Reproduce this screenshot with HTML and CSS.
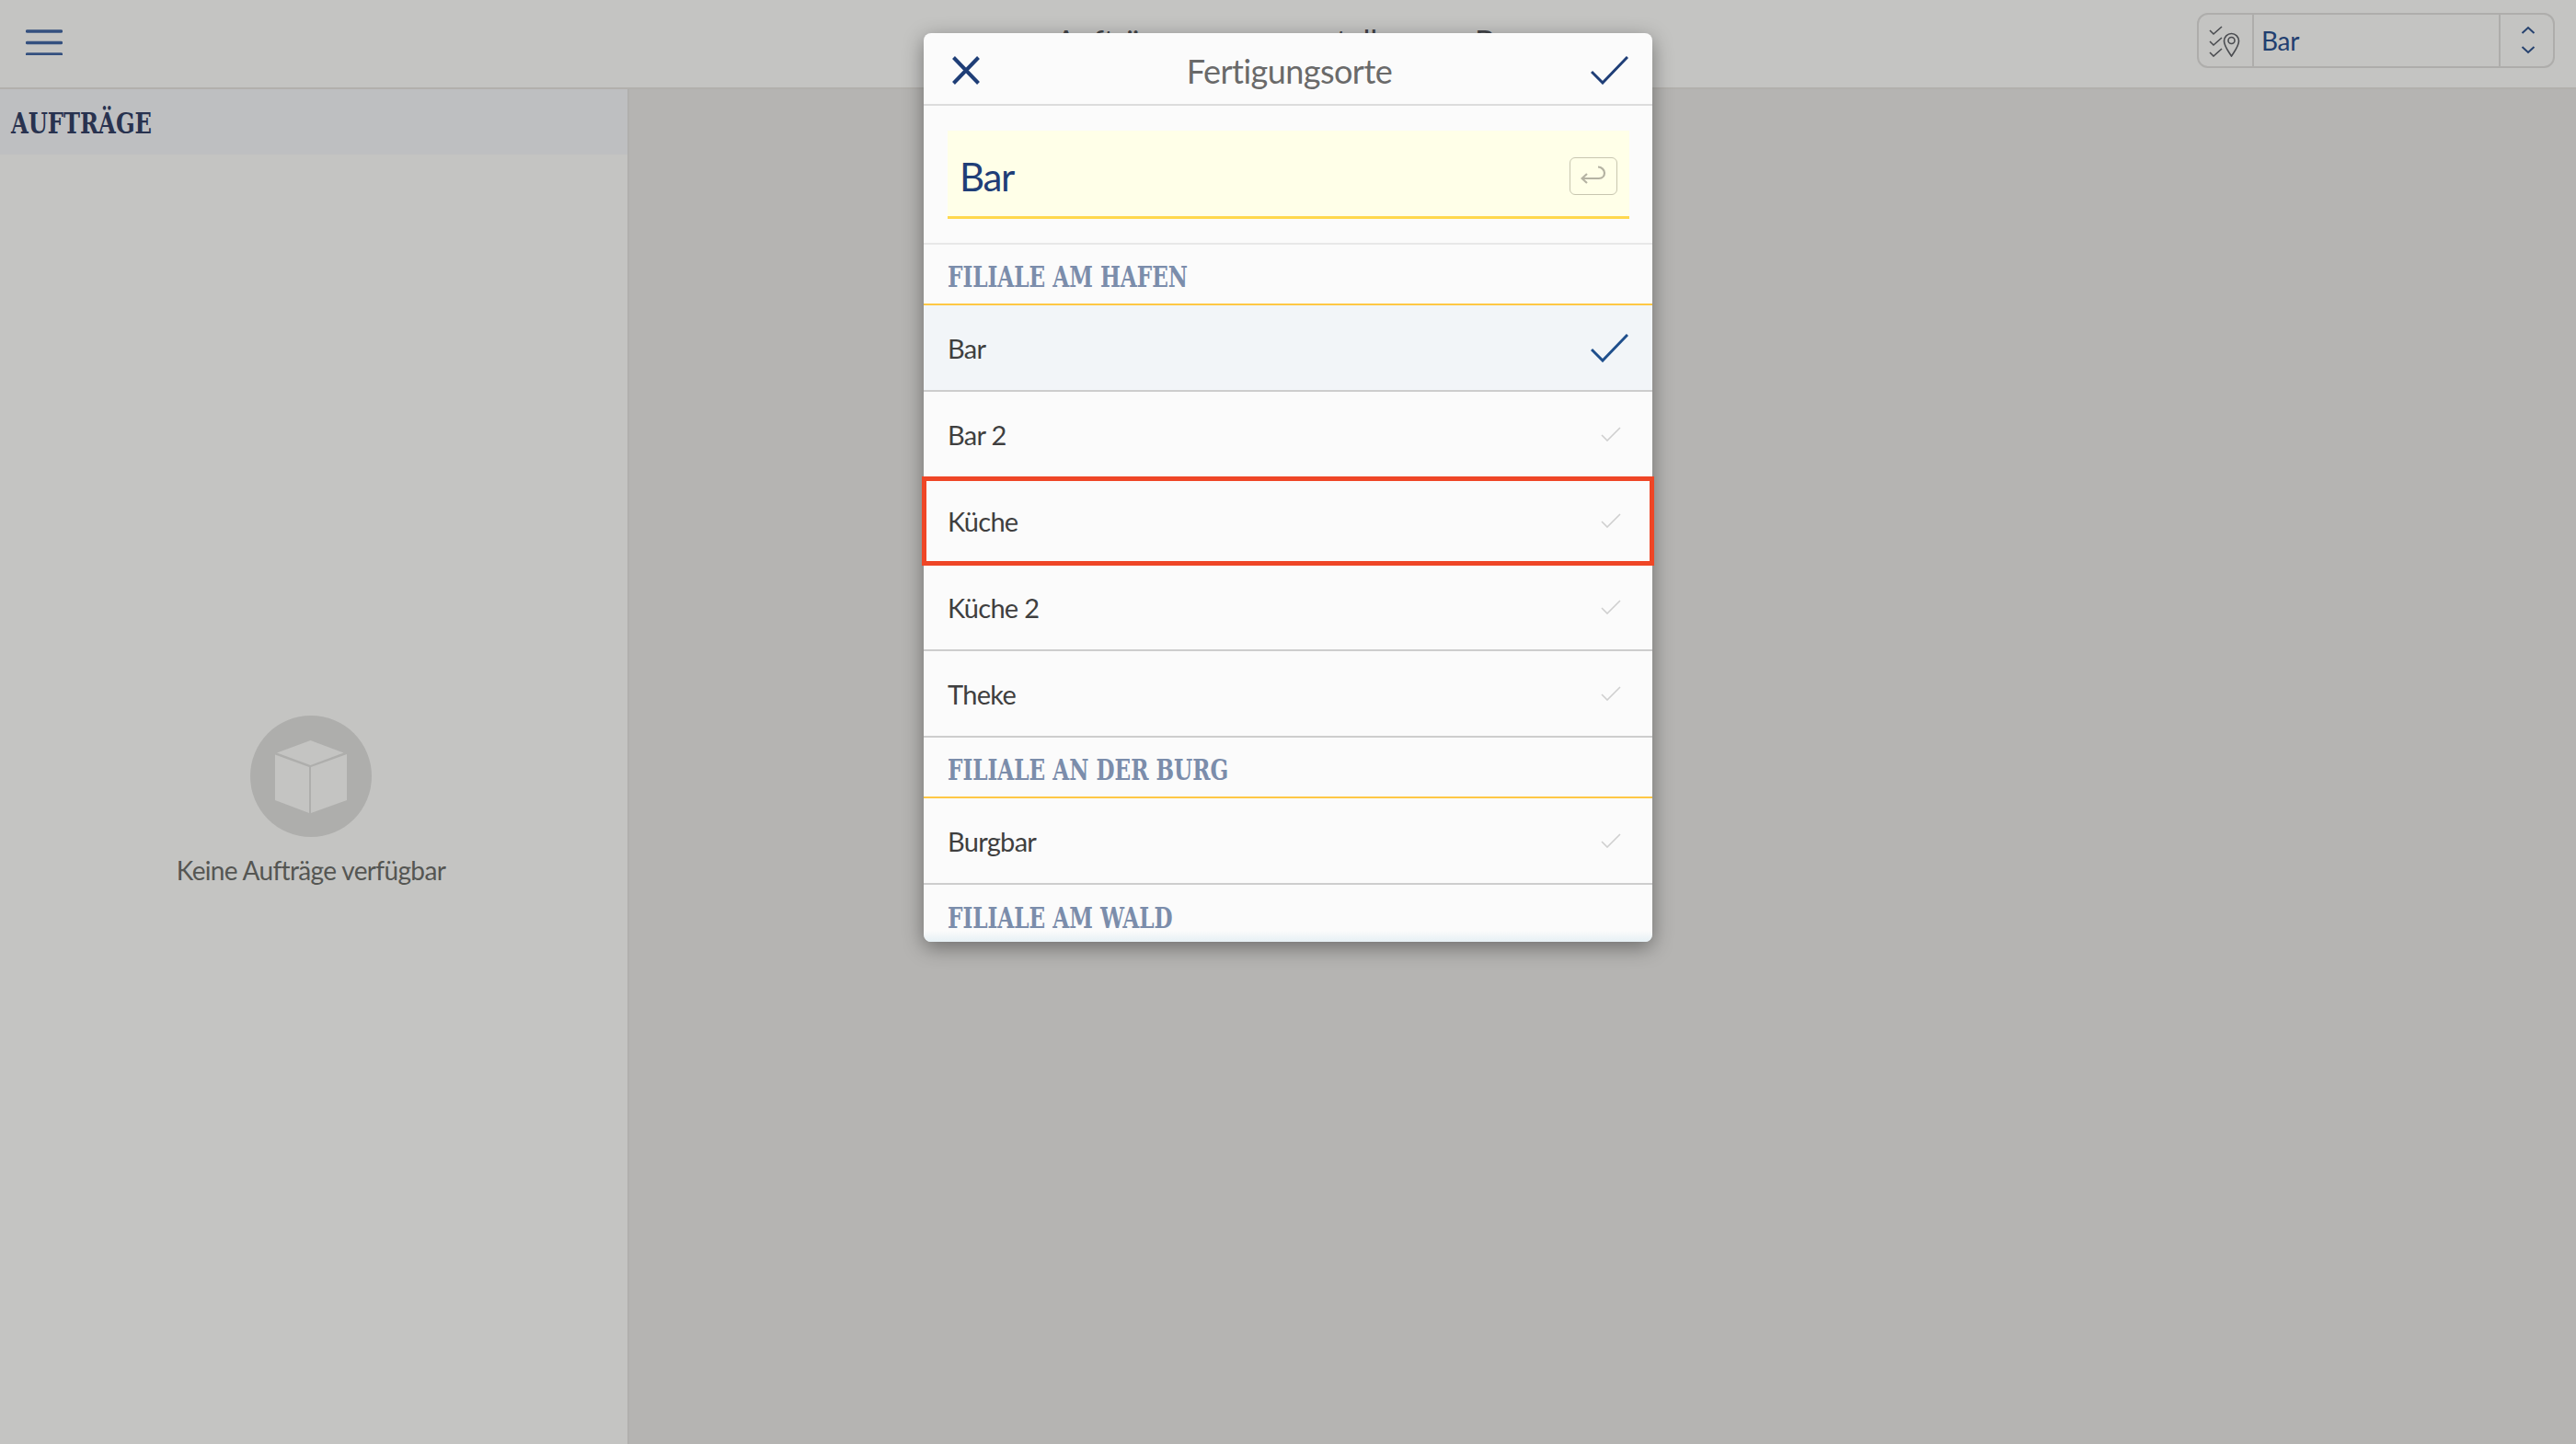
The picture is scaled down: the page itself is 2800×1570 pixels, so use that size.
FILE: index.html
```html
<!DOCTYPE html>
<html lang="de">
<head>
<meta charset="utf-8">
<title>Fertigungsorte</title>
<link rel="stylesheet" href="styles.css">
</head>
<body>
<div class="app">
  <header class="topbar">
    <button class="menu" aria-label="Menü">
      <svg width="40" height="28" viewBox="0 0 40 28"><path d="M1.500 2h37M1.500 14.500h37M1.500 27h37" class="menu-lines"/></svg>
    </button>
    <div class="page-title">Aufträge zusammenstellen von Bar</div>
    <div class="location">
      <span class="location-icon">
        <svg width="34" height="34" viewBox="0 0 34 34" fill="none" stroke="#4a4c50" stroke-width="1.600">
          <path d="M1 5l4 4 9-8M1 17l4 4 9-8M1 29l4 4 9-8"/>
          <path d="M24.500 33C20 26 16.500 22 16.500 16.500a8 8 0 0 1 16 0C32.500 22 29 26 24.500 33z"/>
          <circle cx="24.500" cy="16" r="3.500"/>
        </svg>
      </span>
      <span class="location-value">Bar</span>
      <span class="location-arrows">
        <svg width="16" height="31" viewBox="0 0 16 31" fill="none" stroke="#26426f" stroke-width="2"><path d="M1.500 8l6.500-6 6.500 6M1.500 23l6.500 6 6.500-6"/></svg>
      </span>
    </div>
  </header>
  <div class="content">
    <aside class="sidebar">
      <h2 class="sidebar-title"><span>AUFTRÄGE</span></h2>
      <div class="empty">
        <div class="empty-circle">
          <svg width="80" height="80" viewBox="0 0 80 80">
            <path class="cube" d="M3 14.500L39.500 1l36 13.500L39.500 28z"/>
            <path class="cube" d="M1 16.500l37 13.500v50L1 66z"/>
            <path class="cube" d="M40 30l39-14v50L40 80z"/>
          </svg>
        </div>
        <p class="empty-text">Keine Aufträge verfügbar</p>
      </div>
    </aside>
    <main class="main"></main>
  </div>
</div>

<section class="modal">
  <div class="modal-head">
    <svg class="head-x" width="30" height="31" viewBox="0 0 30 31" fill="none" stroke="#1f3e77" stroke-width="4"><path d="M1.500 1.500l27 28M28.500 1.500l-27 28"/></svg>
    <h1 class="modal-title">Fertigungsorte</h1>
    <svg width="41" height="31" viewBox="0 0 41 31" fill="none" stroke="#1f3e77" stroke-width="3"><path d="M1 17l12 12L40 1"/></svg>
  </div>
  <div class="search-wrap">
    <div class="search">
      <span class="search-value">Bar</span>
      <span class="enter-key">
        <svg width="28" height="22" viewBox="0 0 28 22" fill="none" stroke="#b5b3a3" stroke-width="2.200"><path d="M7 9l-5.500 5L7 19M2 14h18c4 0 6-3 6-6s-3-6.500-7-6.500"/></svg>
      </span>
    </div>
  </div>
  <div class="list">
    <h3 class="group"><span>FILIALE AM HAFEN</span></h3>
    <div class="row selected"><span>Bar</span>
      <svg width="41" height="31" viewBox="0 0 41 31" fill="none" stroke="#1f4f8c" stroke-width="3"><path d="M1 17l12 12L40 1"/></svg></div>
    <div class="row"><span>Bar 2</span><svg class="tick" width="22" height="16" viewBox="0 0 22 16"><path d="M1 9l6 6L21 1"/></svg></div>
    <div class="row highlighted"><span>Küche</span><svg class="tick" width="22" height="16" viewBox="0 0 22 16"><path d="M1 9l6 6L21 1"/></svg></div>
    <div class="row"><span>Küche 2</span><svg class="tick" width="22" height="16" viewBox="0 0 22 16"><path d="M1 9l6 6L21 1"/></svg></div>
    <div class="row"><span>Theke</span><svg class="tick" width="22" height="16" viewBox="0 0 22 16"><path d="M1 9l6 6L21 1"/></svg></div>
    <h3 class="group"><span>FILIALE AN DER BURG</span></h3>
    <div class="row"><span>Burgbar</span><svg class="tick" width="22" height="16" viewBox="0 0 22 16"><path d="M1 9l6 6L21 1"/></svg></div>
    <h3 class="group last"><span>FILIALE AM WALD</span></h3>
  </div>
</section>
</body>
</html>
```
FILE: styles.css
```css
* { box-sizing: border-box; }
html, body { margin: 0; height: 100%; }
body {
  width: 2800px; height: 1570px; overflow: hidden; position: relative;
  background: #b5b4b2;
  font-family: "Lato", "Noto Sans", sans-serif;
}
.app { display: flex; flex-direction: column; height: 100%; }
.topbar {
  height: 97px; flex: none; display: flex; align-items: center; justify-content: space-between;
  background: #c4c4c2; border-bottom: 2px solid #b2b0ac; padding: 0 23px 0 28px; position: relative;
}
.menu { background: none; border: 0; padding: 0; display: block; height: 28px; margin-bottom: 3px; }
.menu svg { display: block; }
.menu-lines { stroke: #34507f; stroke-width: 3.500; stroke-linecap: round; fill: none; }
.page-title {
  position: absolute; left: 0; right: 0; top: 25px; text-align: center;
  font-size: 34px; line-height: 40px; color: #44464a; letter-spacing: -.4px;
}
.location {
  display: flex; width: 389px; height: 60px; margin-bottom: 8px;
  border: 2px solid #aeadab; border-radius: 12px; align-items: stretch;
}
.location-icon { width: 60px; display: flex; align-items: center; justify-content: center; border-right: 2px solid #aeadab; padding: 2px 2px 0 0; }
.location-value { flex: 1; display: flex; align-items: center; padding-left: 8px; font-size: 28px; color: #223f70; letter-spacing: -.3px; }
.location-arrows { width: 59px; border-left: 2px solid #aeadab; display: flex; align-items: center; justify-content: center; padding-left: 3px; }
.content { flex: 1; display: flex; }
.sidebar { width: 684px; background: #c4c4c2; border-right: 2px solid #b0afad; display: flex; flex-direction: column; }
.sidebar-title {
  margin: 0; height: 71px; padding: 3px 0 0 12px; background: #bebfc1; display: flex; align-items: center;
  font-family: "DejaVu Serif", "Liberation Serif", serif; font-stretch: condensed; font-weight: 700; font-size: 32px; color: #28324f;
}
.sidebar-title span { display: inline-block; transform: scaleX(.84); transform-origin: left center; white-space: nowrap; }
.empty { display: flex; flex-direction: column; align-items: center; padding: 610px 6px 0 0; }
.empty-circle { width: 132px; height: 132px; border-radius: 50%; background: #aeaeac; display: flex; align-items: center; justify-content: center; }
.cube { fill: #c4c4c2; }
.empty-text { margin: 19px 0 0; font-size: 28px; color: #555653; letter-spacing: -.65px; }
.modal {
  position: absolute; left: 1004px; top: 36px; width: 792px; height: 988px;
  background: #fbfbfb; border-radius: 8px; box-shadow: 0 6px 22px rgba(0,0,0,.4);
  display: flex; flex-direction: column;
}
.modal-head {
  height: 79px; flex: none; display: flex; align-items: center; justify-content: space-between;
  padding: 4px 26px 0 31px; border-bottom: 2px solid #dcdcdc;
}
.modal-title { margin: 0 0 0 9px; font-weight: 400; font-size: 36px; color: #6a6a6a; letter-spacing: -.55px; }
.search-wrap { height: 151px; flex: none; padding: 27px 25px 0 26px; border-bottom: 2px solid #e8e8e8; }
.search {
  height: 96px; background: #ffffe8; border-bottom: 3px solid #ffd84d;
  display: flex; align-items: center; justify-content: space-between; padding: 5px 13px 0 13px;
}
.search-value { font-size: 42px; color: #1f3e77; letter-spacing: -1.300px; padding-top: 2px; }
.enter-key {
  width: 52px; height: 41px; border: 1.500px solid #c8c6b0; border-radius: 6px;
  display: flex; align-items: center; justify-content: center;
}
.list { flex: 1; position: relative; border-radius: 0 0 8px 8px; }
.list::after {
  content: ""; position: absolute; left: 0; right: 0; bottom: 0; height: 12px; border-radius: 0 0 8px 8px;
  background: linear-gradient(rgba(251,251,251,.3), #e6f0f5);
}
.group {
  margin: 0; height: 66px; padding: 0 0 10px 26px; display: flex; align-items: flex-end;
  font-family: "DejaVu Serif", "Liberation Serif", serif; font-stretch: condensed; font-weight: 700; font-size: 31px; color: #7b8dab;
  border-bottom: 2px solid #ffc845; line-height: 38px;
}
.group span { display: inline-block; transform: scaleX(.83); transform-origin: left center; white-space: nowrap; }
.group.last { border-bottom: 0; height: 62px; padding-bottom: 7px; }
.row {
  height: 94px; display: flex; align-items: center; justify-content: space-between;
  padding: 0 34px 0 26px; border-bottom: 2px solid #cdcdcd; font-size: 29px; color: #3f3f3f; position: relative; letter-spacing: -.7px;
}
.row.selected { background: #f2f5f8; padding-right: 26px; }
.row.highlighted::after {
  content: ""; position: absolute; top: -2px; bottom: -3px; left: -2px; right: -2px;
  border: 5px solid #ef4626; pointer-events: none;
}
.tick { fill: none; stroke: #cfcfcf; stroke-width: 1.600; }
```
